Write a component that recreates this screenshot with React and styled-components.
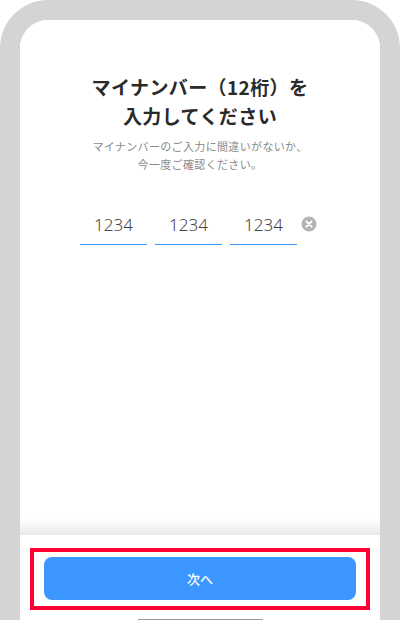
import React from "react";
import styled, { createGlobalStyle } from "styled-components";

const Global = createGlobalStyle`
  html, body { margin: 0; padding: 0; background: #fff; }
  body { font-family: "Noto Sans CJK JP", "Noto Sans", sans-serif; }
`;
const Phone = styled.div`
  width: 400px; height: 620px; box-sizing: border-box; overflow: hidden;
  background: #d4d4d4; border-radius: 48px 48px 0 0;
  padding: 20px 20px 0;
`;
const Screen = styled.div`
  height: 600px; background: #fff; border-radius: 28px 28px 0 0;
  display: flex; flex-direction: column; overflow: hidden;
`;
const Main = styled.main`
  flex: 1; display: flex; flex-direction: column; align-items: center;
  padding-top: 52px; box-sizing: border-box;
  background: linear-gradient(to bottom, rgba(0,0,0,0) calc(100% - 16px), rgba(0,0,0,0.09) 100%), #fff;
`;
const Title = styled.h1`
  margin: 0; font-size: 19px; line-height: 29px; font-weight: 700; color: #2a2a2a; text-align: center;
  letter-spacing: 0.4px;
`;
const Sub = styled.p`
  margin: 7px 0 0; font-size: 11px; line-height: 18px; color: #8a8a8a; text-align: center;
  letter-spacing: 0.35px; font-weight: 400;
`;
const Fields = styled.div`
  display: flex; gap: 8px; margin-top: 36px; margin-left: 60px; align-self: flex-start; align-items: flex-start; position: relative; width: 217px;
`;
const Field = styled.div`
  width: 67px; height: 36px; box-sizing: border-box; border-bottom: 1px solid #3d9bff; padding-top: 3px;
  font-family: "Noto Sans", sans-serif; font-size: 17px; line-height: 26px; font-weight: 300;
  color: #444; text-align: center;
`;
const Clear = styled.svg`
  position: absolute; right: -20px; top: 7px; width: 16px; height: 16px;
`;
const Footer = styled.footer`
  height: 85px; flex: none; background: #fff; position: relative; display: flex; flex-direction: column; align-items: center;
`;
const Highlight = styled.div`
  margin-top: 13px; width: 340px; height: 62px; box-sizing: border-box;
  border: 4px solid #ff0033; padding: 5px 10px;
`;
const Next = styled.button`
  display: block; width: 312px; height: 43px; border: 0; border-radius: 8px;
  background: #3b97ff; color: #fff; font: 500 13px/43px "Noto Sans CJK JP", sans-serif; padding: 0;
`;
const HomeBar = styled.div`
  position: absolute; bottom: 0; left: 118px; width: 125px; height: 1px; background: #999;
`;

export default function App() {
  return (
    <>
      <Global />
      <Phone>
        <Screen>
          <Main>
            <Title>マイナンバー（12桁）を<br />入力してください</Title>
            <Sub>マイナンバーのご入力に間違いがないか、<br />今一度ご確認ください。</Sub>
            <Fields>
              <Field>1234</Field>
              <Field>1234</Field>
              <Field>1234</Field>
              <Clear viewBox="0 0 16 16" aria-label="clear">
                <circle cx="8" cy="8" r="7.5" fill="#b4b4b4" />
                <path d="M5.4 5.4l5.2 5.2M10.6 5.4l-5.2 5.2" stroke="#fff" strokeWidth="2" strokeLinecap="round" />
              </Clear>
            </Fields>
          </Main>
          <Footer>
            <Highlight><Next>次へ</Next></Highlight>
            <HomeBar />
          </Footer>
        </Screen>
      </Phone>
    </>
  );
}
